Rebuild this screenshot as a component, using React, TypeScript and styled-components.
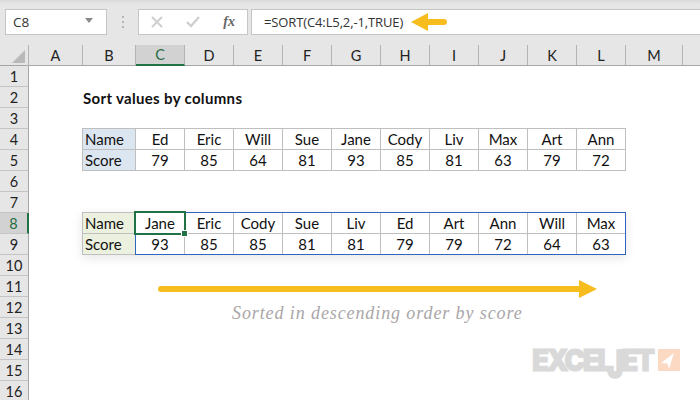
import React from "react";
import styled, { createGlobalStyle } from "styled-components";

const Global = createGlobalStyle`
  html, body { margin: 0; padding: 0; background: #fff; overflow: hidden; }
  #root { width: 700px; height: 400px; overflow: hidden; }
`;

const Page = styled.div`
  position: relative;
  width: 700px;
  height: 400px;
  overflow: hidden;
  font-family: "Lato", "Liberation Sans", sans-serif;
  color: #1a1a1a;
`;

const Toolbar = styled.div`
  display: flex;
  align-items: flex-start;
  padding-top: 9px;
  box-sizing: border-box;
  height: 45px;
  background: linear-gradient(#d9d9d9 0, #e6e6e6 4px);
`;

const NameBox = styled.div`
  display: flex;
  align-items: center;
  justify-content: space-between;
  box-sizing: border-box;
  width: 102px;
  height: 26px;
  margin-left: 5px;
  padding: 0 13px 0 7px;
  background: #fff;
  border: 1px solid #c6c6c6;
  font: 13.5px "Open Sans", sans-serif;
  color: #333;
`;

const Caret = styled.div`
  width: 0;
  height: 0;
  margin-top: -3px;
  border-left: 4px solid transparent;
  border-right: 4px solid transparent;
  border-top: 5px solid #8a8a8a;
`;

const Grip = styled.div`
  display: flex;
  flex-direction: column;
  gap: 3px;
  width: 2px;
  margin: 7px 14px 0 15px;
`;

const GripDot = styled.div`
  width: 2px;
  height: 2px;
  background: #b5b5b5;
`;

const FxBox = styled.div`
  display: flex;
  align-items: center;
  box-sizing: border-box;
  width: 110px;
  height: 26px;
  margin-right: 3px;
  padding: 0 12px 0 12px;
  justify-content: space-between;
  background: #fff;
  border: 1px solid #c6c6c6;
`;

const FxLabel = styled.span`
  font: italic bold 14px "Liberation Serif", serif;
  color: #666;
`;

const FormulaBox = styled.div`
  display: flex;
  align-items: center;
  gap: 8px;
  flex: 1;
  box-sizing: border-box;
  height: 26px;
  padding-left: 12px;
  background: #fff;
  border: 1px solid #c6c6c6;
  border-right: 0;
  font: 13px "Open Sans", sans-serif;
  letter-spacing: -0.12px;
  color: #333;
`;

const ColumnRow = styled.div`
  display: grid;
  grid-template-columns: 29px 54px 53px repeat(10, 49px) 57px 1fr;
  height: 21px;
  background: #e6e6e6;
  box-sizing: border-box;
  border-bottom: 1px solid #a6a6a6;
`;

const Corner = styled.div`
  position: relative;
  box-sizing: border-box;
  border-right: 1px solid #b4b4b4;
`;

const CornerMark = styled.div`
  position: absolute;
  right: 3px;
  bottom: 3px;
  width: 0;
  height: 0;
  border-left: 13px solid transparent;
  border-bottom: 13px solid #b9b9b9;
`;

const ColumnHead = styled.div<{ $active?: boolean }>`
  display: flex;
  align-items: center;
  justify-content: center;
  box-sizing: border-box;
  height: ${(p) => (p.$active ? "21px" : "20px")};
  font-size: 14.5px;
  color: ${(p) => (p.$active ? "#1f6e43" : "#222")};
  background: ${(p) => (p.$active ? "#d2d2d2" : "transparent")};
  border-right: 1px solid #b4b4b4;
  border-bottom: ${(p) => (p.$active ? "2px solid #217346" : "0")};
`;

const Body = styled.div`
  display: flex;
`;

const RowHeads = styled.div`
  display: flex;
  flex-direction: column;
  width: 29px;
  flex: none;
`;

const RowHead = styled.div<{ $active?: boolean }>`
  display: flex;
  align-items: center;
  justify-content: center;
  box-sizing: border-box;
  height: 21px;
  flex: none;
  font-size: 14.5px;
  color: ${(p) => (p.$active ? "#1f6e43" : "#222")};
  background: ${(p) => (p.$active ? "#d2d2d2" : "#e6e6e6")};
  border-bottom: 1px solid #c4c4c4;
  border-right: ${(p) => (p.$active ? "2px solid #217346" : "1px solid #a6a6a6")};
`;

const Sheet = styled.div`
  display: grid;
  grid-template-columns: 54px 53px repeat(10, 49px) 57px;
  grid-auto-rows: 21px;
  flex: 1;
`;

const Title = styled.div`
  grid-column: 2 / 8;
  grid-row: 2;
  align-self: center;
  font-size: 15px;
  letter-spacing: 0.33px;
  font-weight: 700;
  color: #111;
  white-space: nowrap;
`;

const DataTable = styled.div<{ $row: number; $shadow?: boolean }>`
  position: relative;
  grid-column: 2 / 13;
  grid-row: ${(p) => p.$row} / span 2;
  display: grid;
  grid-template-columns: 53px repeat(10, 49px);
  grid-auto-rows: 21px;
  margin: -1px 0 0 -1px;
  width: 544px;
  height: 43px;
  box-sizing: border-box;
  border-left: 1px solid #bfbfbf;
  border-top: 1px solid #bfbfbf;
  box-shadow: ${(p) => (p.$shadow ? "0 3px 10px rgba(0,0,0,.10)" : "none")};
`;

const Cell = styled.div`
  display: flex;
  align-items: center;
  justify-content: center;
  box-sizing: border-box;
  font-size: 15px;
  color: #111;
  border-right: 1px solid #bfbfbf;
  border-bottom: 1px solid #bfbfbf;
  background: #fff;
`;

const LabelCell = styled(Cell)<{ $tone: string }>`
  justify-content: flex-start;
  padding-left: 2px;
  background: ${(p) => p.$tone};
`;

const Selection = styled.div`
  position: absolute;
  left: 52px;
  top: -1px;
  width: 491px;
  height: 43px;
  box-sizing: border-box;
  border: 1px solid #2f66bf;
  pointer-events: none;
`;

const ActiveCell = styled.div`
  position: absolute;
  left: 51px;
  top: -2px;
  width: 52px;
  height: 24px;
  box-sizing: border-box;
  border: 2px solid #217346;
  pointer-events: none;
`;

const FillHandle = styled.div`
  position: absolute;
  right: -4px;
  bottom: -4px;
  width: 5px;
  height: 5px;
  background: #217346;
  border: 1px solid #fff;
`;

const ArrowRow = styled.div`
  grid-column: 1 / -1;
  grid-row: 11;
  display: flex;
  align-items: center;
  padding-left: 129px;
  padding-top: 5px;
`;

const CaptionRow = styled.div`
  grid-column: 1 / -1;
  grid-row: 12;
  display: flex;
  align-items: center;
  padding-left: 203px;
  margin-top: 11px;
  font: italic 18px "Liberation Serif", serif;
  letter-spacing: 0.9px;
  color: #aaa6a8;
  white-space: nowrap;
`;

const Logo = styled.div`
  position: absolute;
  left: 532px;
  top: 343px;
  display: flex;
  align-items: flex-start;
  gap: 3px;
`;

const LogoText = styled.div`
  width: 123px;
  font: 900 30px/34px "Inter", sans-serif;
  letter-spacing: -2.6px;
  color: #d9d9d9;
  -webkit-text-stroke: 1px #d9d9d9;
  white-space: nowrap;
  transform: scaleX(0.93);
  transform-origin: left top;
`;

const LogoJ = styled.span`
  display: inline-block;
  margin-left: -4px;
  transform: scaleY(1.3);
  transform-origin: 50% 6px;
`;

const columns = ["A", "B", "C", "D", "E", "F", "G", "H", "I", "J", "K", "L", "M"];
const rows = Array.from({ length: 16 }, (_, i) => i + 1);
const topNames = ["Ed", "Eric", "Will", "Sue", "Jane", "Cody", "Liv", "Max", "Art", "Ann"];
const topScores = [79, 85, 64, 81, 93, 85, 81, 63, 79, 72];
const sortedNames = ["Jane", "Eric", "Cody", "Sue", "Liv", "Ed", "Art", "Ann", "Will", "Max"];
const sortedScores = [93, 85, 85, 81, 81, 79, 79, 72, 64, 63];

const TableCells = ({ names, scores, tone }: { names: string[]; scores: number[]; tone: string }) => (
  <>
    <LabelCell $tone={tone}>Name</LabelCell>
    {names.map((n, i) => (
      <Cell key={`n${i}`}>{n}</Cell>
    ))}
    <LabelCell $tone={tone}>Score</LabelCell>
    {scores.map((s, i) => (
      <Cell key={`s${i}`}>{s}</Cell>
    ))}
  </>
);

export default function App() {
  return (
    <Page>
      <Global />
      <Toolbar>
        <NameBox>
          C8
          <Caret />
        </NameBox>
        <Grip>
          <GripDot />
          <GripDot />
          <GripDot />
        </Grip>
        <FxBox>
          <svg width="12" height="12" viewBox="0 0 12 12">
            <path d="M1 1l10 10M11 1L1 11" stroke="#cfcfcf" strokeWidth="2" fill="none" />
          </svg>
          <svg width="14" height="12" viewBox="0 0 14 12">
            <path d="M1 6l4 4 8-9" stroke="#cfcfcf" strokeWidth="2.4" fill="none" />
          </svg>
          <FxLabel>fx</FxLabel>
        </FxBox>
        <FormulaBox>
          =SORT(C4:L5,2,-1,TRUE)
          <svg width="36" height="20" viewBox="0 0 36 20">
            <path d="M0 10L17 1v6h16a3 3 0 0 1 0 6H17v6z" fill="#f7bc1e" />
          </svg>
        </FormulaBox>
      </Toolbar>
      <ColumnRow>
        <Corner>
          <CornerMark />
        </Corner>
        {columns.map((c) => (
          <ColumnHead key={c} $active={c === "C"}>
            {c}
          </ColumnHead>
        ))}
      </ColumnRow>
      <Body>
        <RowHeads>
          {rows.map((r) => (
            <RowHead key={r} $active={r === 8}>
              {r}
            </RowHead>
          ))}
        </RowHeads>
        <Sheet>
          <Title>Sort values by columns</Title>
          <DataTable $row={4}>
            <TableCells names={topNames} scores={topScores} tone="#dce6f1" />
          </DataTable>
          <DataTable $row={8} $shadow>
            <TableCells names={sortedNames} scores={sortedScores} tone="#ebf1de" />
            <Selection />
            <ActiveCell>
              <FillHandle />
            </ActiveCell>
          </DataTable>
          <ArrowRow>
            <svg width="439" height="18" viewBox="0 0 439 18">
              <path d="M3 6h418V0l18 9-18 9v-6H3a3 3 0 0 1 0-6z" fill="#f7bc1e" />
            </svg>
          </ArrowRow>
          <CaptionRow>Sorted in descending order by score</CaptionRow>
        </Sheet>
      </Body>
      <Logo>
        <LogoText>
          EXCEL<LogoJ>J</LogoJ>ET
        </LogoText>
        <svg width="22" height="22" viewBox="0 0 22 22" style={{ marginTop: 6 }}>
          <rect width="22" height="22" fill="#fbd9c3" />
          <path d="M16 4L3 14l6.5.5L11 20z" fill="#fff" />
        </svg>
      </Logo>
    </Page>
  );
}
